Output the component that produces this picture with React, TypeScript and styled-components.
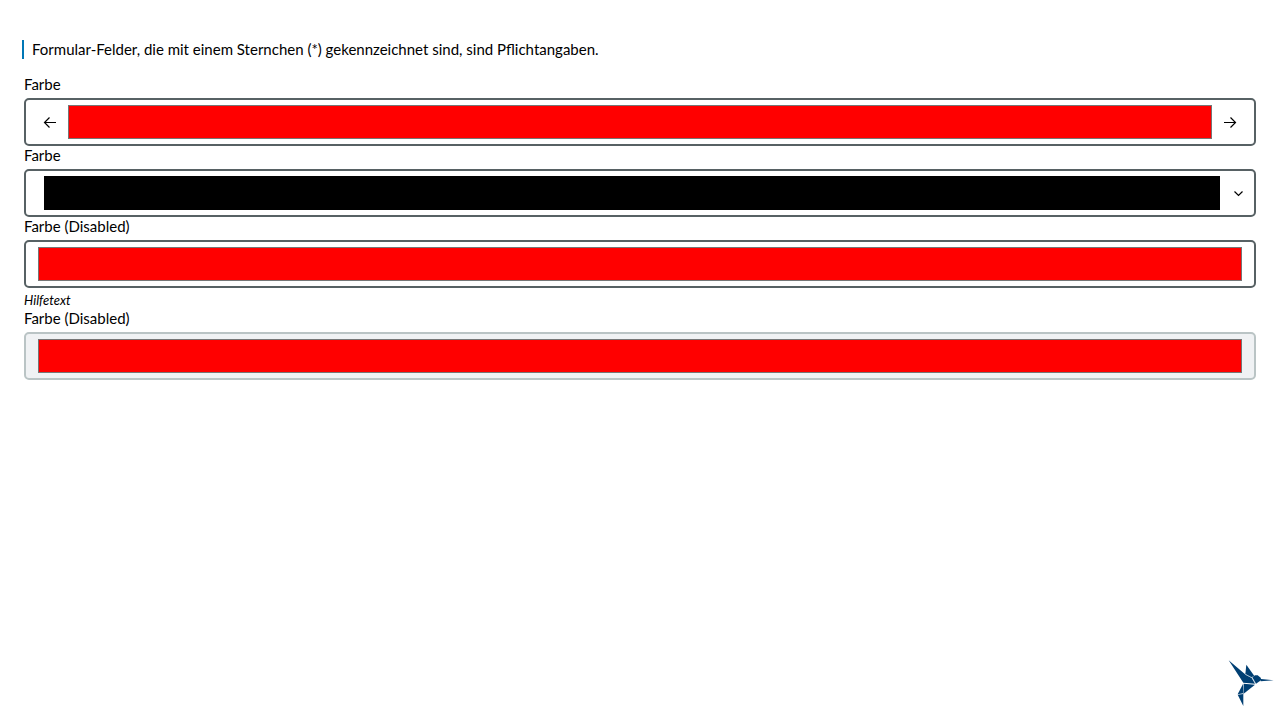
import React, { useId, useState } from "react";
import styled, { createGlobalStyle } from "styled-components";

const GlobalStyle = createGlobalStyle`
  *, *::before, *::after { box-sizing: border-box; }
  body {
    margin: 0;
    background: #fff;
    color: #000;
    font: 15px/19px Lato, "Noto Sans", sans-serif;
  }
`;

const Page = styled.main`
  padding: 40px 24px 24px;
`;

const Notice = styled.p`
  margin: 0 0 16px -2px;
  padding-left: 8px;
  border-left: 2px solid #0077b6;
`;

const Form = styled.form`
  display: flex;
  flex-direction: column;
`;

const Field = styled.div`
  display: flex;
  flex-direction: column;
  gap: 4px;
`;

const Label = styled.label`
  align-self: flex-start;
`;

const Control = styled.div<{ $muted?: boolean; $padding: string }>`
  display: flex;
  align-items: center;
  gap: 6px;
  height: 48px;
  padding: ${(p) => p.$padding};
  border: 2px solid ${(p) => (p.$muted ? "#bac4c5" : "#576164")};
  border-radius: 5px;
  background: ${(p) => (p.$muted ? "#f0f2f4" : "#fff")};
`;

const ColorInput = styled.input<{ $edge: string }>`
  flex: 1;
  min-width: 0;
  height: 34px;
  margin: 0;
  padding: 0;
  border: 0;
  background: none;
  appearance: none;

  &::-webkit-color-swatch-wrapper { padding: 0; }
  &::-webkit-color-swatch {
    border: 1px solid ${(p) => p.$edge};
    border-radius: 0;
  }
`;

const IconButton = styled.button`
  display: flex;
  align-items: center;
  justify-content: center;
  flex: none;
  width: 24px;
  height: 24px;
  padding: 0;
  border: 0;
  background: none;
  color: #000;
`;

const Hint = styled.span`
  font-size: 13px;
  line-height: 17px;
  font-style: italic;
`;

const Brand = styled.svg`
  position: fixed;
  right: 0;
  bottom: 8px;
`;

const paths = {
  left: "M13 7.5H1.5M6.5 2.5l-5 5 5 5",
  right: "M1 7.5h11.5M7.5 2.5l5 5-5 5",
  down: "M3.5 5.5l4 4 4-4",
};

function Icon({ name }: { name: keyof typeof paths }) {
  return (
    <svg width="14" height="14" viewBox="0 0 14 14" fill="none" stroke="currentColor" strokeWidth="1.2" aria-hidden="true">
      <path d={paths[name]} />
    </svg>
  );
}

interface ColorFieldProps {
  label: string;
  initial?: string;
  edge?: string;
  padding?: string;
  disabled?: boolean;
  hint?: string;
  before?: React.ReactNode;
  after?: React.ReactNode;
}

function ColorField({ label, initial = "#ff0000", edge = "#767676", padding = "0 12px", disabled, hint, before, after }: ColorFieldProps) {
  const id = useId();
  const [value, setValue] = useState(initial);
  return (
    <Field>
      <Label htmlFor={id}>{label}</Label>
      <Control $muted={disabled} $padding={padding}>
        {before}
        <ColorInput id={id} type="color" value={value} $edge={edge} disabled={disabled} onChange={(e) => setValue(e.target.value)} />
        {after}
      </Control>
      {hint && <Hint>{hint}</Hint>}
    </Field>
  );
}

function Hummingbird() {
  return (
    <Brand width="60" height="62" viewBox="0 0 180 186" role="img" aria-label="KoliBri">
      <g fill="#003f73">
        <path d="M26 31L78 75L95 84L105 101L70 98Z" />
        <path d="M79 44L103 78L94 82L76 72Z" />
        <path d="M97 82L105 76L113 76L122 83L124 90L108 101Z" />
        <path d="M123 87L161 91L122 94Z" />
        <path d="M71 101L105 104L70 132Z" />
        <path d="M69 102V130L53 133Z" />
        <path d="M53 134L70 132V168Z" />
      </g>
      <path d="M76 73L96 83L107 101" fill="none" stroke="#9dbbd0" strokeWidth="1.5" />
    </Brand>
  );
}

export default function App() {
  return (
    <>
      <GlobalStyle />
      <Page>
        <Notice>Formular-Felder, die mit einem Sternchen (*) gekennzeichnet sind, sind Pflichtangaben.</Notice>
        <Form>
          <ColorField
            label="Farbe"
            before={<IconButton type="button" aria-label="Zurück"><Icon name="left" /></IconButton>}
            after={<IconButton type="button" aria-label="Weiter"><Icon name="right" /></IconButton>}
          />
          <ColorField
            label="Farbe"
            initial="#000000"
            edge="#000"
            padding="0 4px 0 18px"
            after={<IconButton type="button" aria-label="Farben anzeigen"><Icon name="down" /></IconButton>}
          />
          <ColorField label="Farbe (Disabled)" hint="Hilfetext" />
          <ColorField label="Farbe (Disabled)" disabled />
        </Form>
      </Page>
      <Hummingbird />
    </>
  );
}
